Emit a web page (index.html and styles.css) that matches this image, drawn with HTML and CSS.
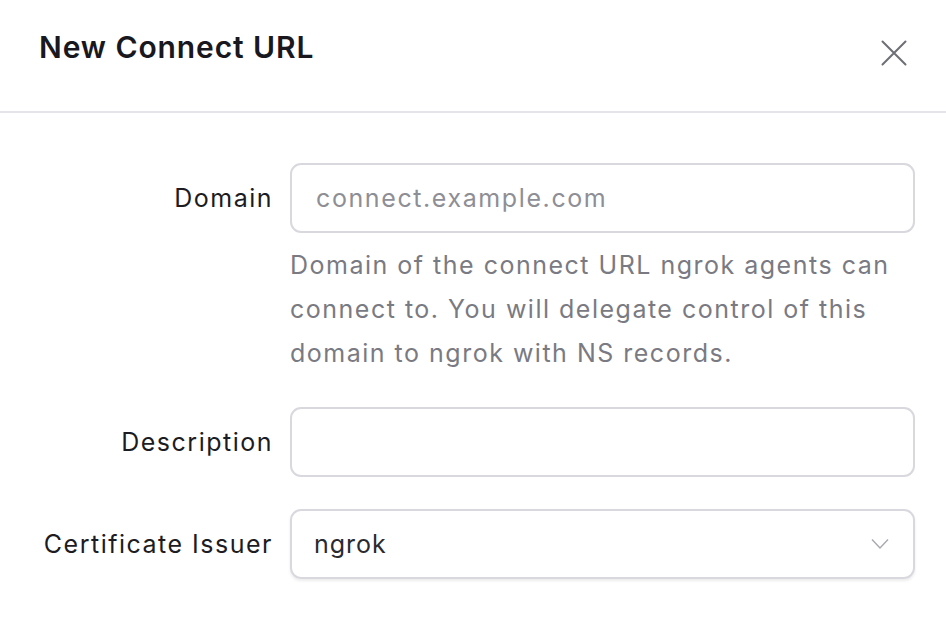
FILE: index.html
```html
<!DOCTYPE html>
<html>
<head>
<meta charset="utf-8">
<link rel="stylesheet" href="styles.css">
</head>
<body>
<div class="modal">
  <header class="modal-header">
    <h1 class="title">New Connect URL</h1>
    <button class="close" aria-label="Close">
      <svg width="28" height="28" viewBox="0 0 28 28"><path d="M2.5 2.5L25.5 25.5M25.5 2.5L2.5 25.5" stroke="#6e6e76" stroke-width="2" stroke-linecap="round" fill="none"/></svg>
    </button>
  </header>
  <div class="form">
    <label class="label">Domain</label>
    <div class="field">
      <div class="input placeholder">connect.example.com</div>
      <p class="help">Domain of the connect URL ngrok agents can connect to. You will delegate control of this domain to ngrok with NS records.</p>
    </div>
    <label class="label">Description</label>
    <div class="field">
      <div class="input"></div>
    </div>
    <label class="label">Certificate Issuer</label>
    <div class="field">
      <div class="input select">
        <span>ngrok</span>
        <svg width="18" height="12" viewBox="0 0 18 12"><path d="M1 1.5L9 10L17 1.5" stroke="#a8a8b0" stroke-width="1.4" fill="none"/></svg>
      </div>
    </div>
  </div>
</div>
</body>
</html>
```
FILE: styles.css
```css
* { box-sizing: border-box; }
html, body { margin: 0; padding: 0; background: #fff; }
body { font-family: Inter, "Noto Sans", sans-serif; color: #1c1c22; }
.modal { width: 946px; height: 632px; background: #fff; }
.modal-header {
  height: 113px;
  border-bottom: 2px solid #e4e4e9;
  display: flex;
  align-items: flex-start;
  justify-content: space-between;
  padding: 27px 38px 0 39px;
}
.title { margin: 0; font-size: 30px; font-weight: 600; letter-spacing: 0.9px; color: #18181e; line-height: 40px; }
.close { border: 0; background: none; padding: 0; margin-top: 12px; width: 28px; height: 28px; cursor: pointer; }
.close svg { display: block; }
.form {
  display: grid;
  grid-template-columns: 273px 625px;
  column-gap: 17px;
  row-gap: 32px;
  padding-top: 50px;
  align-items: start;
}
.label { text-align: right; font-size: 25px; letter-spacing: 1.5px; line-height: 70px; color: #1c1c22; font-weight: 400; }
.field { display: flex; flex-direction: column; }
.input {
  height: 70px;
  border: 2px solid #d8d8de;
  border-radius: 11px;
  padding: 0 24px;
  display: flex;
  align-items: center;
  font-size: 25px;
  letter-spacing: 1.6px;
  color: #2a2a30;
}
.placeholder { color: #8e8e95; }
.select { justify-content: space-between; padding-left: 22px; padding-right: 24px; box-shadow: 0 2px 3px rgba(0,0,0,0.08); letter-spacing: 1px; }
.help { margin: 10px 0 0; font-size: 25px; letter-spacing: 1.5px; line-height: 44px; color: #7a7a82; }
```
